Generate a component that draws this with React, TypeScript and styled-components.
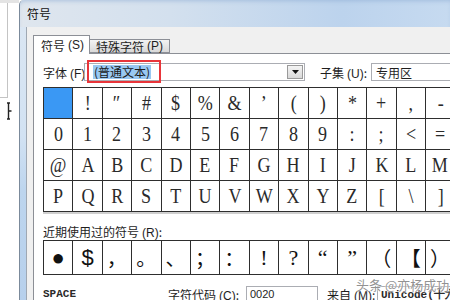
import React from "react";
import styled, { createGlobalStyle } from "styled-components";

const Global = createGlobalStyle`
  html, body { margin: 0; padding: 0; background: #ffffff; overflow: hidden; }
  body { font-family: "Noto Sans CJK SC", "Liberation Sans", sans-serif; font-size: 12px; color: #1e1e1e; }
`;

const Page = styled.div`
  position: relative;
  width: 450px;
  height: 300px;
  display: flex;
  overflow: hidden;
  background: #fff;
`;

const Desktop = styled.div`
  width: 19px;
  flex: none;
  display: flex;
  flex-direction: column;
  align-items: flex-start;
  border-top: 3px solid #e4e4e4;
`;

const DesktopBox = styled.div`
  width: 7px;
  height: 94px;
  border-right: 1px solid #c4c4c4;
  border-bottom: 1px solid #c4c4c4;
  background: #fff;
`;

const Cursor = styled.svg`
  margin-top: 4px;
  margin-left: 6px;
`;

const Window = styled.div`
  flex: 1;
  display: flex;
  flex-direction: column;
  border-left: 1px solid #7b8a9b;
  border-top-left-radius: 5px;
  background: linear-gradient(180deg, #d9e5f2 0%, #cddff1 40%, #b9d1ec 100%);
  min-width: 0;
`;

const TitleBar = styled.div`
  height: 27px;
  flex: none;
  display: flex;
  align-items: center;
  padding-left: 7px;
  font-size: 12px;
  color: #111;
  background: linear-gradient(90deg, #dfe6ee 0%, #d3e0ee 35%, #bcd3ed 75%, #c6daf0 100%);
  box-shadow: inset 0 3px 4px -2px rgba(140, 170, 210, 0.6);
  border-top-left-radius: 5px;
`;

const Body = styled.div`
  flex: 1;
  display: flex;
  min-height: 0;
`;

const FrameBand = styled.div`
  width: 6px;
  flex: none;
  background: linear-gradient(180deg, #dae6f3 0%, #d2e2f3 40%, #bdd5ee 60%, #b7d0ec 100%);
`;

const Content = styled.div`
  flex: 1;
  min-width: 0;
  background: #f0f0f0;
  border-left: 1px solid #9fa8b3;
  padding: 8px 0 0 6px;
  display: flex;
  flex-direction: column;
`;

const TabStrip = styled.div`
  display: flex;
  align-items: flex-end;
  height: 18px;
  flex: none;
`;

const Tab = styled.div<{ $active?: boolean }>`
  position: relative;
  z-index: ${(p) => (p.$active ? 1 : 0)};
  height: ${(p) => (p.$active ? "19px" : "14px")};
  margin-bottom: ${(p) => (p.$active ? "-1px" : "0")};
  padding: 0 ${(p) => (p.$active ? "7px" : "6px")};
  display: flex;
  align-items: center;
  font-size: 12px;
  color: #1e1e1e;
  border: 1px solid #8c8f96;
  border-bottom: ${(p) => (p.$active ? "none" : "1px solid #8c8f96")};
  border-left: ${(p) => (p.$active ? "1px solid #8c8f96" : "none")};
  background: ${(p) => (p.$active ? "#ffffff" : "linear-gradient(180deg, #f3f3f3 0%, #e6e6e6 50%, #d9d9d9 100%)")};
  box-sizing: border-box;
  width: ${(p) => (p.$active ? "57px" : "80px")};
  white-space: nowrap;
`;

const Mn = styled.span`
  font-family: "Liberation Sans", sans-serif;
  font-size: 12px;
  margin-left: 3px;
`;

const Panel = styled.div`
  flex: 1;
  background: #ffffff;
  border-top: 1px solid #8c8f96;
  border-left: 1px solid #8c8f96;
  padding: 8px 0 0 9px;
  display: flex;
  flex-direction: column;
  overflow: hidden;
`;

const FontRow = styled.div`
  height: 20px;
  display: flex;
  align-items: center;
  flex: none;
`;

const Label = styled.span<{ $w?: number; $ml?: number }>`
  display: inline-block;
  width: ${(p) => (p.$w ? `${p.$w}px` : "auto")};
  margin-left: ${(p) => p.$ml ?? 0}px;
  flex: none;
  font-size: 12px;
  color: #1e1e1e;
  white-space: nowrap;
`;

const Combo = styled.div`
  position: relative;
  width: 221px;
  height: 18px;
  box-sizing: border-box;
  border: 1px solid #abadb3;
  background: #fff;
  display: flex;
  align-items: center;
  padding-left: 8px;
  flex: none;
`;

const Highlight = styled.span`
  background: #99c8f2;
  color: #1a1a1a;
  font-size: 12px;
  line-height: 14px;
  padding: 0 1px;
`;

const DropButton = styled.div`
  margin-left: auto;
  margin-right: 1px;
  width: 16px;
  height: 14px;
  box-sizing: border-box;
  border: 1px solid #9a9a9a;
  background: linear-gradient(180deg, #f4f4f4, #d8d8d8);
  display: flex;
  align-items: center;
  justify-content: center;
`;

const Annotation = styled.div`
  position: absolute;
  left: 2px;
  top: -4px;
  width: 74px;
  height: 23px;
  border: 2px solid #e8353a;
  box-sizing: border-box;
  pointer-events: none;
`;

const SubsetBox = styled.div`
  height: 18px;
  flex: 1;
  box-sizing: border-box;
  border: 1px solid #abadb3;
  border-right: none;
  background: #fff;
  display: flex;
  align-items: center;
  padding-left: 4px;
  font-size: 12px;
`;

const CharGrid = styled.div<{ $rowH: number }>`
  display: grid;
  grid-template-columns: repeat(16, 28.4px);
  grid-auto-rows: ${(p) => p.$rowH}px;
  gap: 1px;
  padding: 1px;
  background: #2e2e2e;
  width: max-content;
  flex: none;
`;

const MainGrid = styled(CharGrid)`
  margin-top: 5px;
  box-shadow: 0 2px 0 #cfcfcf;
`;

const Cell = styled.div<{ $sel?: boolean }>`
  background: ${(p) => (p.$sel ? "#3a98f4" : "#ffffff")};
  display: flex;
  align-items: center;
  justify-content: center;
  font-family: "Liberation Serif", "DejaVu Serif", serif;
  font-size: 22px;
  color: #2a2a2a;
`;

const Glyph = styled.span`
  display: inline-block;
  transform: scaleX(0.82);
`;

const RecentLabel = styled.div`
  margin-top: 12px;
  height: 16px;
  line-height: 16px;
  font-size: 12px;
  flex: none;
`;

const RecentCell = styled.div<{ $kind?: "cjk" | "sans" | "serif" }>`
  background: #ffffff;
  display: flex;
  align-items: center;
  justify-content: ${(p) => (p.$kind === "cjk" ? "flex-start" : "center")};
  padding-left: ${(p) => (p.$kind === "cjk" ? "4px" : "0")};
  font-family: ${(p) =>
    p.$kind === "sans"
      ? `"Liberation Sans", sans-serif`
      : p.$kind === "cjk"
      ? `"Noto Sans CJK SC", sans-serif`
      : `"Liberation Serif", serif`};
  font-size: ${(p) => (p.$kind === "cjk" ? "20px" : "22px")};
  font-weight: 400;
  color: #111;
`;

const BottomRow = styled.div`
  margin-top: 10px;
  height: 18px;
  display: flex;
  align-items: center;
  flex: none;
`;

const MonoText = styled.span<{ $w?: number }>`
  display: inline-block;
  width: ${(p) => (p.$w ? `${p.$w}px` : "auto")};
  font-family: "Liberation Mono", "DejaVu Sans Mono", monospace;
  font-size: 11px;
  font-weight: 700;
  color: #2a2a2a;
  flex: none;
  white-space: nowrap;
`;

const CodeInput = styled.div<{ $w: number }>`
  width: ${(p) => p.$w}px;
  height: 17px;
  box-sizing: border-box;
  border: 1px solid #abadb3;
  background: #fff;
  display: flex;
  align-items: center;
  padding-left: 3px;
  font-family: "Liberation Sans", sans-serif;
  font-size: 11px;
  flex: none;
  white-space: nowrap;
  overflow: hidden;
`;

const Watermark = styled.div`
  position: absolute;
  left: 356px;
  top: 275px;
  font-size: 13px;
  color: rgba(110, 110, 110, 0.75);
  text-shadow: 0 0 2px #fff, 0 0 1px #fff;
  white-space: nowrap;
  pointer-events: none;
`;

const rows: string[][] = [
  [" ", "!", "″", "#", "$", "%", "&", "’", "(", ")", "*", "+", ",", "-", ".", "/"],
  ["0", "1", "2", "3", "4", "5", "6", "7", "8", "9", ":", ";", "<", "=", ">", "?"],
  ["@", "A", "B", "C", "D", "E", "F", "G", "H", "I", "J", "K", "L", "M", "N", "O"],
  ["P", "Q", "R", "S", "T", "U", "V", "W", "X", "Y", "Z", "[", "\\", "]", "^", "_"],
];

const recent: { c: string; k: "cjk" | "sans" | "serif" }[] = [
  { c: "●", k: "serif" },
  { c: "$", k: "sans" },
  { c: "，", k: "cjk" },
  { c: "。", k: "cjk" },
  { c: "、", k: "cjk" },
  { c: "；", k: "cjk" },
  { c: "：", k: "cjk" },
  { c: "!", k: "serif" },
  { c: "?", k: "serif" },
  { c: "“", k: "serif" },
  { c: "”", k: "serif" },
  { c: "（", k: "cjk" },
  { c: "【", k: "cjk" },
  { c: "）", k: "cjk" },
  { c: "", k: "serif" },
  { c: "", k: "serif" },
];

export default function App() {
  return (
    <>
      <Global />
      <Page>
        <Desktop>
          <DesktopBox />
          <Cursor width="8" height="18" viewBox="0 0 8 18">
            <path d="M1 1h3M2.5 1v16M1 17h3M2.5 9h3" stroke="#222" strokeWidth="1.4" fill="none" />
          </Cursor>
        </Desktop>
        <Window>
          <TitleBar>符号</TitleBar>
          <Body>
            <FrameBand />
            <Content>
              <TabStrip>
                <Tab $active>
                  符号<Mn>(S)</Mn>
                </Tab>
                <Tab>
                  特殊字符<Mn>(P)</Mn>
                </Tab>
              </TabStrip>
              <Panel>
                <FontRow>
                  <Label $w={41}>
                    字体<Mn>(F)</Mn>
                  </Label>
                  <Combo>
                    <Highlight>(普通文本)</Highlight>
                    <DropButton>
                      <svg width="7" height="4" viewBox="0 0 7 4">
                        <path d="M0 0h7L3.5 4z" fill="#111" />
                      </svg>
                    </DropButton>
                    <Annotation />
                  </Combo>
                  <Label $w={51} $ml={15}>
                    子集<Mn>(U)</Mn>:
                  </Label>
                  <SubsetBox>专用区</SubsetBox>
                </FontRow>
                <MainGrid $rowH={30}>
                  {rows.flatMap((r, ri) =>
                    r.map((c, ci) => (
                      <Cell key={`${ri}-${ci}`} $sel={ri === 0 && ci === 0}>
                        <Glyph>{c}</Glyph>
                      </Cell>
                    ))
                  )}
                </MainGrid>
                <RecentLabel>
                  近期使用过的符号<Mn>(R)</Mn>:
                </RecentLabel>
                <CharGrid $rowH={33}>
                  {recent.map((r, i) => (
                    <RecentCell key={i} $kind={r.k}>
                      {r.c}
                    </RecentCell>
                  ))}
                </CharGrid>
                <BottomRow>
                  <MonoText $w={125}>SPACE</MonoText>
                  <Label $w={78}>
                    字符代码<Mn>(C)</Mn>:
                  </Label>
                  <CodeInput $w={72}>0020</CodeInput>
                  <Label $w={50} $ml={9}>
                    来自<Mn>(M)</Mn>:
                  </Label>
                  <CodeInput $w={120}>
                    <MonoText>Unicode(十六进制)</MonoText>
                  </CodeInput>
                </BottomRow>
              </Panel>
            </Content>
          </Body>
        </Window>
        <Watermark>头条 @亦杨成功</Watermark>
      </Page>
    </>
  );
}
